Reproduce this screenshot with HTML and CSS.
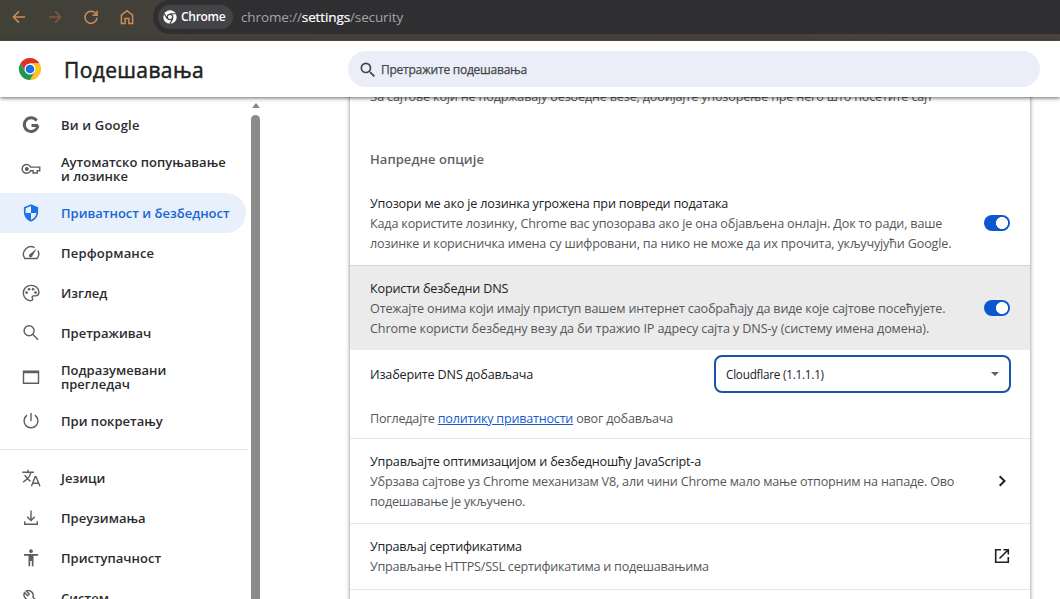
FILE: index.html
```html
<!DOCTYPE html>
<html lang="sr">
<head>
<meta charset="utf-8">
<title>Подешавања</title>
<link rel="stylesheet" href="styles.css">
</head>
<body>
<div class="toolbar">
  <div class="nav">
    <svg viewBox="0 0 24 24"><path d="M20 12H5M12 4.500L4.500 12l7.500 7.500"/></svg>
    <svg class="dim" viewBox="0 0 24 24"><path d="M4 12h15M12 4.500l7.500 7.500-7.500 7.500"/></svg>
    <svg viewBox="0 0 24 24"><path d="M19 8.500A8 8 0 1 0 20 13M20 3.500V9.500H14"/></svg>
    <svg viewBox="0 0 24 24"><path d="M4.500 20.500V9.500L12 3.500l7.500 6v11h-5v-6.500h-5v6.500z"/></svg>
  </div>
  <div class="omnibox">
    <div class="chip">
      <svg viewBox="0 0 24 24"><circle cx="12" cy="12" r="11.500" fill="#fff"/><circle cx="12" cy="12" r="4.600" fill="#fff" stroke="#444447" stroke-width="2.200"/><path d="M12 6.400H22.500M7.100 14.800L2 6M16.900 14.800L11.700 23.800" stroke="#444447" stroke-width="2" fill="none"/></svg>
      <span>Chrome</span>
    </div>
    <div class="url"><span>chrome://</span><b>settings</b><span>/security</span></div>
  </div>
</div>
<header class="header">
  <svg class="logo" viewBox="0 0 48 48"><path d="M24 12h20.785A24 24 0 0 0 3.215 12L13.608 30z" fill="#db3326"/><path d="M34.392 30L24 48A24 24 0 0 0 44.785 12H24z" fill="#fcc41c"/><path d="M13.608 30L3.215 12A24 24 0 0 0 24 48l10.392-18z" fill="#23964a"/><circle cx="24" cy="24" r="12" fill="#fff"/><circle cx="24" cy="24" r="9.500" fill="#1a6fe4"/></svg>
  <h1 class="title">Подешавања</h1>
  <div class="search">
    <svg viewBox="0 0 24 24"><path d="M15.500 14h-.79l-.28-.27A6.471 6.471 0 0 0 16 9.500 6.500 6.500 0 1 0 9.500 16c1.610 0 3.090-.59 4.230-1.570l.27.28v.79l5 4.990L20.490 19l-4.990-5zm-6 0C7.010 14 5 11.990 5 9.500S7.010 5 9.500 5 14 7.010 14 9.500 11.990 14 9.500 14z"/></svg>
    <span>Претражите подешавања</span>
  </div>
</header>
<div class="body">
  <nav class="side">
    <div class="item"><svg viewBox="0 0 24 24"><path d="M20.400 12.500H12.600M18.800 6.800A8.200 8.200 0 1 0 20.300 12.500" fill="none" stroke="currentColor" stroke-width="3.500"/></svg><span class="wide">Ви и Google</span></div>
    <div class="item tall"><svg viewBox="0 0 24 24" class="line"><path d="M11.500 9.700A5.300 5.300 0 1 0 11.500 14H14.500v2.700h5V14H22.500v-4.300z"/><circle cx="7" cy="12" r="2.400" fill="currentColor" stroke="none"/></svg><span>Аутоматско попуњавање<br>и лозинке</span></div>
    <div class="item active"><svg viewBox="0 0 24 24"><path d="M12 1.500L3.500 5v6.200c0 5.200 3.600 9.700 8.500 11.300 4.900-1.600 8.500-6.100 8.500-11.300V5zM12 3.700V12h6.500c-.5 3.800-3 7-6.500 8.300V12H5.500V6.300z" fill-rule="evenodd"/></svg><span>Приватност и безбедност</span></div>
    <div class="item"><svg viewBox="0 0 24 24" class="line"><path d="M16.300 5.600A9 9 0 0 0 4.500 18.500h15A9 9 0 0 0 20.300 9"/><path d="M10.400 13.500L19 6.500l-5.600 9.300a2 2 0 1 1-3-2.300z" fill="currentColor" stroke="none"/></svg><span class="wide">Перформансе</span></div>
    <div class="item"><svg viewBox="0 0 24 24" class="line"><path d="M12 2.800a9.200 9.200 0 0 0 0 18.400c1.400 0 2-1 1.900-2-.1-1.200-.9-1.600-.5-2.700.3-.8 1-1.100 1.900-1.100H17a4.700 4.700 0 0 0 4.500-4.700C21.500 6.300 17.400 2.800 12 2.800z"/><g fill="currentColor" stroke="none"><circle cx="6.700" cy="11.500" r="1.600"/><circle cx="9.700" cy="7.500" r="1.600"/><circle cx="14.500" cy="7.500" r="1.600"/><circle cx="17.500" cy="11.500" r="1.600"/></g></svg><span>Изглед</span></div>
    <div class="item"><svg viewBox="0 0 24 24" class="line"><circle cx="9.700" cy="9.200" r="6"/><path d="M14 13.500l6.500 6.500"/></svg><span>Претраживач</span></div>
    <div class="item tall"><svg viewBox="0 0 24 24" class="line"><path d="M3 5h18v14.500H3zM3 6.500h18"/></svg><span>Подразумевани<br>прегледач</span></div>
    <div class="item"><svg viewBox="0 0 24 24" class="line"><path d="M12 2.500V12M7.300 5A8.300 8.300 0 1 0 16.700 5"/></svg><span>При покретању</span></div>
    <div class="divider"></div>
    <div class="item"><svg viewBox="0 0 24 24" class="line"><path d="M1.500 5h14M8.500 2v3M12 5c-1 5-4.500 9-9.500 12M4.500 8.500c2 3.500 4 5.500 7 7.500M12.500 22L17 10.500h1L22.700 22M14.500 18.300h6.300"/></svg><span>Језици</span></div>
    <div class="item"><svg viewBox="0 0 24 24" class="line"><path d="M12 3v11.500M7.500 10.500L12 15l4.500-4.500M4.500 16v3.500h15V16"/></svg><span>Преузимања</span></div>
    <div class="item"><svg viewBox="0 0 24 24"><circle cx="12" cy="3.800" r="2.200"/><path d="M3.500 7.200h17v2.100H15V22h-2v-6.500h-2V22H9V9.300H3.500z"/></svg><span>Приступачност</span></div>
    <div class="item"><svg viewBox="0 0 24 24" class="line"><path d="M4.200 5.500L8 9.200l2-2L6.300 3.500a6 6 0 0 1 8 7.500l7 7-2.800 2.800-7-7a6 6 0 0 1-7.300-8.300z"/></svg><span>Систем</span></div>
  </nav>
  <div class="scroll"><div class="arrow"></div><div class="thumb"></div></div>
  <main class="main">
    <section class="card">
      <p class="sub cut">За сајтове који не подржавају безбедне везе, добијајте упозорење пре него што посетите сајт</p>
      <h2 class="heading">Напредне опције</h2>
      <div class="row first">
        <div class="text"><p>Упозори ме ако је лозинка угрожена при повреди података</p><p class="sub">Када користите лозинку, Chrome вас упозорава ако је она објављена онлајн. Док то ради, ваше<br>лозинке и корисничка имена су шифровани, па нико не може да их прочита, укључујући Google.</p></div>
        <div class="toggle"></div>
      </div>
      <div class="row hover">
        <div class="text"><p>Користи безбедни DNS</p><p class="sub">Отежајте онима који имају приступ вашем интернет саобраћају да виде које сајтове посећујете.<br><span class="loose">Chrome користи безбедну везу да би тражио IP адресу сајта у DNS-у (систему имена домена).</span></p></div>
        <div class="toggle"></div>
      </div>
      <div class="dns"><span class="label">Изаберите DNS добављача</span><div class="select"><span>Cloudflare (1.1.1.1)</span><i class="caret"></i></div></div>
      <p class="sub policy">Погледајте <a>политику приватности</a> овог добављача</p>
      <div class="row">
        <div class="text"><p>Управљајте оптимизацијом и безбедношћу JavaScript-а</p><p class="sub"><span class="snug">Убрзава сајтове уз Chrome механизам V8, али чини Chrome мало мање отпорним на нападе. Ово</span><br><span class="tight">подешавање је укључено.</span></p></div>
        <svg class="act" viewBox="0 0 20 20"><path d="M7.700 5.200L12.500 10l-4.800 4.800"/></svg>
      </div>
      <div class="row cert">
        <div class="text tight"><p>Управљај сертификатима</p><p class="sub">Управљање HTTPS/SSL сертификатима и подешавањима</p></div>
        <svg class="act thin" viewBox="0 0 20 20"><path d="M9 3.700H3.700v12.600h12.600V11M11.500 3.700h4.800v4.800M16 4l-8.500 8.500"/></svg>
      </div>
      <div class="row"></div>
    </section>
  </main>
</div>
</body>
</html>
```
FILE: styles.css
```css
* { box-sizing: border-box; }
body { margin: 0; width: 1060px; height: 599px; overflow: hidden; display: flex; flex-direction: column; background: #fff; font: 13px/20px "Open Sans", "Noto Sans", sans-serif; color: #202124; }
p, h1, h2 { margin: 0; }
p, span { white-space: nowrap; }

.toolbar { flex: none; height: 41px; display: flex; background: linear-gradient(90deg, #414138, #45403b 45%, #4b413d); border-bottom: 1px solid #57504b; }
.nav { width: 153px; height: 34px; display: flex; align-items: center; gap: 18px; padding-left: 10px; }
.nav svg { width: 18px; height: 18px; fill: none; stroke: #d38a52; stroke-width: 2; }
.nav .dim { stroke: #82593c; }
.omnibox { flex: 1; height: 34px; display: flex; align-items: center; background: #2f2f31; border-radius: 17px 0 0 17px; padding-left: 5px; }
.chip { width: 75px; height: 24px; border-radius: 12px; background: #444447; display: flex; align-items: center; padding-left: 5px; gap: 4px; color: #fff; font-size: 12px; font-weight: 600; letter-spacing: -.3px; }
.chip svg { width: 14px; height: 14px; }
.url { margin-left: 8px; font-size: 13.500px; letter-spacing: -.12px; color: #a3a3a5; display: flex; }
.url b { color: #fff; font-weight: 400; -webkit-text-stroke: .2px; }

.header { flex: none; height: 56px; display: flex; align-items: center; position: relative; z-index: 1; background: #fff; box-shadow: 0 1px 4px rgba(0,0,0,.6); padding-left: 19px; }
.logo { width: 22px; height: 22px; }
.title { margin-left: 23px; width: 284px; font-size: 21px; line-height: 30px; font-weight: 400; letter-spacing: .38px; -webkit-text-stroke: .5px; padding-top: 2px; }
.search { width: 692px; height: 36px; border-radius: 18px; background: #ebeef8; display: flex; align-items: center; padding: 1px 0 0 10px; gap: 3px; font-size: 12px; letter-spacing: -.24px; -webkit-text-stroke: .25px; color: #44474a; }
.search svg { width: 20px; height: 20px; fill: #44474a; }

.body { flex: 1; min-height: 0; display: flex; }
.side { width: 248px; padding-top: 8px; overflow: hidden; }
.item { width: 246px; height: 40px; display: flex; align-items: center; padding-left: 21px; gap: 20px; line-height: 14px; font-weight: 600; color: #2b2c2f; }
.item .wide { letter-spacing: .18px; }
.item.tall { height: 48px; }
.item svg { flex: none; width: 20px; height: 20px; color: #5b5f63; fill: currentColor; }
.item svg.line { fill: none; stroke: currentColor; stroke-width: 1.700; }
.item.active { background: #e8f0fc; border-radius: 0 20px 20px 0; color: #1967d2; }
.item.active svg { color: #1a73e8; }
.divider { height: 1px; background: #e3e3e3; margin: 8px 0; }
.scroll { width: 15px; display: flex; flex-direction: column; align-items: center; padding-top: 6px; }
.arrow { border: 4.500px solid transparent; border-top: 0; border-bottom: 5px solid #858585; }
.thumb { width: 9px; flex: 1; margin-top: 7px; border-radius: 4.500px 4.500px 0 0; background: #8b8b8b; }

.main { flex: 1; min-width: 0; padding: 0 30px 0 87px; overflow: hidden; }
.card { width: 680px; height: 530px; margin-top: -10px; box-shadow: 0 0 4px rgba(0,0,0,.5); background: #fff; font-size: 12.600px; letter-spacing: -.165px; }
.sub { color: #55575b; }
.loose { letter-spacing: -.122px; }
.snug { letter-spacing: -.19px; }
.tight { letter-spacing: -.235px; }
.cut { padding-left: 20px; }
.heading { height: 74px; padding: 42px 20px 0; font-size: 13px; line-height: 20px; font-weight: 600; letter-spacing: .05px; color: #5f6368; }
.row { display: flex; align-items: center; padding: 12px 20px; border-top: 1px solid #e7e7e7; }
.row.first { border: 0; }
.row.hover { background: #ebebeb; border-color: #d6d6d6; }
.row.cert { padding-bottom: 13px; }
.text { flex: 1; padding-top: 1px; margin-bottom: -1px; }
.toggle { flex: none; width: 26px; height: 16px; border-radius: 8px; background: radial-gradient(circle at 18px 8px, #fff 5.700px, #0b57d0 6.300px); }
.dns { display: flex; justify-content: space-between; align-items: center; padding: 5px 19px 0 20px; }
.label { padding-top: 2px; }
.select { width: 297px; height: 38px; border: 2px solid #1a53a9; border-radius: 8px; display: flex; align-items: center; justify-content: space-between; padding: 0 10px; font-size: 11.700px; letter-spacing: -.22px; }
.caret { border: 4px solid transparent; border-top: 4px solid #5f6368; border-bottom: 0; }
.policy { padding: 16px 20px 9px; letter-spacing: -.22px; }
.policy a { color: #1a5bcc; text-decoration: underline; }
.act { width: 20px; height: 20px; margin-right: -2px; fill: none; stroke: #202124; stroke-width: 2; }
.act.thin { stroke-width: 1.600; }
```
